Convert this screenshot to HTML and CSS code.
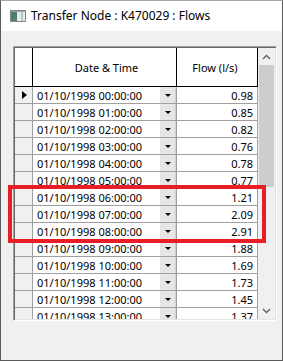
FILE: index.html
```html
<!DOCTYPE html>
<html>
<head>
<meta charset="utf-8">
<link rel="stylesheet" href="styles.css">
</head>
<body>
<div class="window">
  <div class="titlebar">
    <svg class="appicon" width="16" height="12" viewBox="0 0 16 12">
      <rect x="0.5" y="0.5" width="15" height="11" fill="#e8ecec" stroke="#7d8a8a"/>
      <rect x="1" y="2" width="6" height="9" fill="#4f7f74"/>
      <rect x="1" y="1" width="14" height="1" fill="#9aa8a8"/>
      <rect x="11" y="2" width="2" height="9" fill="#b9c4c4"/>
    </svg>
    <span class="title">Transfer Node : K470029 : Flows</span>
  </div>
  <div class="client">
    <div class="gridbox">
      <div class="table">
        <div class="row head">
          <div class="c ind"></div>
          <div class="c date">Date &amp; Time</div>
          <div class="c flow">Flow (l/s)</div>
        </div>
        <div class="row"><div class="c ind"><span class="arrow"></span></div><div class="c date"><span class="dt">01/10/1998 00:00:00</span><span class="dd"></span></div><div class="c flow">0.98</div></div>
        <div class="row"><div class="c ind"></div><div class="c date"><span class="dt">01/10/1998 01:00:00</span><span class="dd"></span></div><div class="c flow">0.85</div></div>
        <div class="row"><div class="c ind"></div><div class="c date"><span class="dt">01/10/1998 02:00:00</span><span class="dd"></span></div><div class="c flow">0.82</div></div>
        <div class="row"><div class="c ind"></div><div class="c date"><span class="dt">01/10/1998 03:00:00</span><span class="dd"></span></div><div class="c flow">0.76</div></div>
        <div class="row"><div class="c ind"></div><div class="c date"><span class="dt">01/10/1998 04:00:00</span><span class="dd"></span></div><div class="c flow">0.78</div></div>
        <div class="row"><div class="c ind"></div><div class="c date"><span class="dt">01/10/1998 05:00:00</span><span class="dd"></span></div><div class="c flow">0.77</div></div>
        <div class="row"><div class="c ind"></div><div class="c date"><span class="dt">01/10/1998 06:00:00</span><span class="dd"></span></div><div class="c flow">1.21</div></div>
        <div class="row"><div class="c ind"></div><div class="c date"><span class="dt">01/10/1998 07:00:00</span><span class="dd"></span></div><div class="c flow">2.09</div></div>
        <div class="row"><div class="c ind"></div><div class="c date"><span class="dt">01/10/1998 08:00:00</span><span class="dd"></span></div><div class="c flow">2.91</div></div>
        <div class="row"><div class="c ind"></div><div class="c date"><span class="dt">01/10/1998 09:00:00</span><span class="dd"></span></div><div class="c flow">1.88</div></div>
        <div class="row"><div class="c ind"></div><div class="c date"><span class="dt">01/10/1998 10:00:00</span><span class="dd"></span></div><div class="c flow">1.69</div></div>
        <div class="row"><div class="c ind"></div><div class="c date"><span class="dt">01/10/1998 11:00:00</span><span class="dd"></span></div><div class="c flow">1.73</div></div>
        <div class="row"><div class="c ind"></div><div class="c date"><span class="dt">01/10/1998 12:00:00</span><span class="dd"></span></div><div class="c flow">1.45</div></div>
        <div class="row"><div class="c ind"></div><div class="c date"><span class="dt">01/10/1998 13:00:00</span><span class="dd"></span></div><div class="c flow">1.37</div></div>
      </div>
      <div class="vscroll">
        <div class="sbtn"><svg width="9" height="6" viewBox="0 0 9 6"><path d="M1 5 L4.5 1.5 L8 5" fill="none" stroke="#606060" stroke-width="1.4"/></svg></div>
        <div class="track"><div class="thumb"></div></div>
        <div class="sbtn"><svg width="9" height="6" viewBox="0 0 9 6"><path d="M1 1 L4.5 4.5 L8 1" fill="none" stroke="#606060" stroke-width="1.4"/></svg></div>
      </div>
    </div>
  </div>
  <div class="highlight"></div>
</div>
</body>
</html>
```
FILE: styles.css
```css
* { box-sizing: border-box; }
html, body { margin: 0; padding: 0; background: #f0f0f0; }
body { font-family: "Noto Sans", "Liberation Sans", sans-serif; }

.window {
  position: relative;
  width: 283px;
  height: 361px;
  background: #f0f0f0;
  border: 1px solid #5a5a5a;
  border-top: 1px solid #a8a8a8;
  display: flex;
  flex-direction: column;
}

.titlebar {
  height: 30px;
  background: #ffffff;
  display: flex;
  align-items: center;
  padding-left: 9px;
  padding-bottom: 1px;
}
.appicon { flex: none; }
.title {
  margin-left: 5px;
  font-size: 12px;
  color: #000;
  white-space: nowrap;
}

.client {
  flex: 1;
  padding: 15px 5px 0 12px;
}

.gridbox {
  display: flex;
  width: 264px;
  height: 275px;
  border-top: 1px solid #a0a0a0;
  border-left: 1px solid #a0a0a0;
  border-right: 1px solid #ffffff;
  border-bottom: 1px solid #ffffff;
  box-shadow: inset 1px 1px 0 #696969, inset -1px -1px 0 #e3e3e3;
  padding: 1px;
}

.table {
  width: 243px;
  height: 271px;
  overflow: hidden;
  background: #ffffff;
  font-size: 11px;
  color: #000;
}

.row {
  display: flex;
  height: 17px;
  border-bottom: 1px solid #a0a0a0;
}
.row.head {
  height: 39px;
  border-bottom: 1px solid #000;
}

.c {
  border-right: 1px solid #a0a0a0;
  display: flex;
  align-items: center;
  white-space: nowrap;
}
.head .c { border-right-color: #000; justify-content: center; }

.ind { width: 18px; background: #f0f0f0; justify-content: center; }
.head .ind { background: #ffffff; }
.date { width: 144px; padding-left: 4px; justify-content: space-between; }
.flow { width: 81px; justify-content: flex-end; padding-right: 4px; }

.arrow {
  width: 0; height: 0;
  border-top: 4.5px solid transparent;
  border-bottom: 4.5px solid transparent;
  border-left: 5px solid #000;
  margin-left: 1px;
}

.dd {
  width: 16px;
  height: 16px;
  background: #e6e6e6;
  border-right: 1px solid #cfcfcf;
  display: flex;
  align-items: center;
  justify-content: center;
}
.dd::after {
  content: "";
  width: 0; height: 0;
  border-left: 3px solid transparent;
  border-right: 3px solid transparent;
  border-top: 3px solid #000;
}

.vscroll {
  width: 17px;
  height: 271px;
  display: flex;
  flex-direction: column;
  background: #f0f0f0;
}
.sbtn {
  height: 17px;
  display: flex;
  align-items: center;
  justify-content: center;
}
.track { flex: 1; padding: 0 1px; }
.thumb { height: 122px; background: #cdcdcd; }

.highlight {
  position: absolute;
  left: 7px;
  top: 184px;
  width: 258px;
  height: 58px;
  border: 4px solid #e81d25;
}
```
